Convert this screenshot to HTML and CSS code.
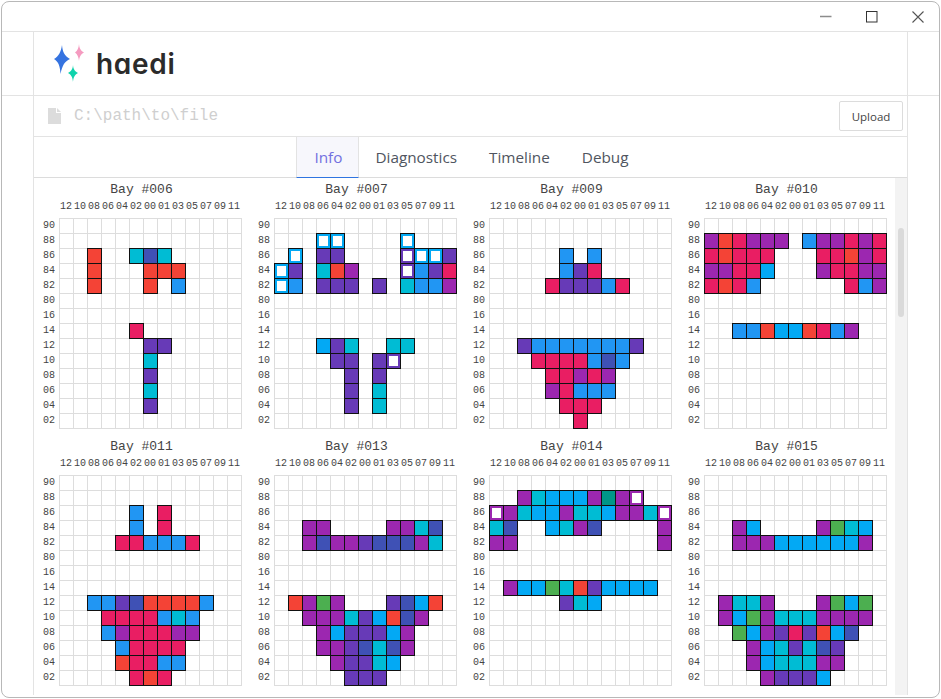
FILE: index.html
```html
<!DOCTYPE html>
<html lang="en">
<head>
    <meta charset="UTF-8">
    <meta name="viewport" content="width=device-width, initial-scale=1.0">
    <title>haedi</title>
    <link rel="stylesheet" href="styles.css">
</head>
<body>
    <div class="window">
        <div class="titlebar">
            <button class="win_btn"><svg width="12" height="12" viewBox="0 0 12 12"><path d="M0 5.5H11.5" stroke="#8c8c8c" stroke-width="1.4"/></svg></button>
            <button class="win_btn"><svg width="12" height="12" viewBox="0 0 12 12"><rect x="0.5" y="0.5" width="10.5" height="10.5" fill="none" stroke="#333" stroke-width="1"/></svg></button>
            <button class="win_btn"><svg width="12" height="12" viewBox="0 0 12 12"><path d="M0.5 0.5L11.5 11.5M11.5 0.5L0.5 11.5" stroke="#555" stroke-width="1.1" fill="none"/></svg></button>
        </div>

        <div class="header">
            <div class="container logo_row">
                <svg class="logo" width="34" height="40" viewBox="0 0 34 40">
                    <path d="M10 1C10.6 8 12.5 12 18 15C12.5 17.5 10.5 21 8.5 30C8 21 6 17.5 2 15C6.5 12.5 9 8 10 1Z" fill="#3573e0"/>
                    <path d="M27 0C27.3 4 28.5 6.5 32 8.500C28.500 10.500 27.500 13 27 17C26.500 13 25.500 10.500 23 8.500C25.500 6.500 26.700 4 27 0Z" fill="#f59bc0"/>
                    <path d="M21 21C21.300 25 22.500 27 26 29C22.500 31 21.500 33 21 38C20.500 33 19.500 31 16 29C19.500 27 20.700 25 21 21Z" fill="#0fd3ac"/>
                </svg>
                <span class="logo_text">haedi</span>
            </div>
        </div>

        <div class="container main">
            <div class="file_row">
                <svg class="file_icon" width="13" height="16" viewBox="0 0 13 16"><path d="M0 0H8V5H13V16H0ZM9 0L13 4H9Z" fill="#dcdcdc"/></svg>
                <span class="file_path">C:\path\to\file</span>
                <button class="upload_btn">Upload</button>
            </div>

            <div class="tabs">
                <div class="tab active">Info</div>
                <div class="tab">Diagnostics</div>
                <div class="tab">Timeline</div>
                <div class="tab">Debug</div>
            </div>

            <div class="content">
                <div class="bays" id="bays"></div>
                <div class="scrollbar"><div class="thumb"></div></div>
            </div>
        </div>
    </div>

    <script src="script.js"></script>
</body>
</html>
```

FILE: styles.css
```css
html, body {
    margin: 0;
    padding: 0;
    background-color: #fff;
    overflow: hidden;
}

.window {
    box-sizing: border-box;
    width: 939px;
    height: 697px;
    margin: 1px;
    border: 1px solid #b8b8b8;
    border-radius: 8px;
    background-color: #fff;
    display: flex;
    flex-direction: column;
    overflow: hidden;
}

.titlebar {
    box-sizing: border-box;
    height: 30px;
    flex: none;
    display: flex;
    justify-content: flex-end;
    margin-right: -2px;
    border-bottom: 1px solid #e3e3e3;
}

.win_btn {
    width: 46px;
    padding: 0;
    border: none;
    background: none;
    display: flex;
    align-items: center;
    justify-content: center;
}

.header {
    flex: none;
    border-bottom: 1px solid #e3e3e3;
}

.container {
    box-sizing: border-box;
    width: 875px;
    margin: 0 auto;
    border-left: 1px solid #e3e3e3;
    border-right: 1px solid #e3e3e3;
}

.logo_row {
    height: 63px;
    display: flex;
    align-items: center;
    padding-left: 18px;
}

.logo {
    align-self: flex-start;
    margin-top: 12px;
}

.logo_text {
    margin-left: 10px;
    margin-top: 1px;
    font-family: "Inter", sans-serif;
    font-feature-settings: "cv11";
    font-size: 28px;
    font-weight: 600;
    letter-spacing: 0.7px;
    color: #2b2b2b;
}

.main {
    flex: 1;
    min-height: 0;
    margin-bottom: 2px;
    display: flex;
    flex-direction: column;
}

.file_row {
    box-sizing: border-box;
    height: 41px;
    flex: none;
    display: flex;
    align-items: center;
    padding: 0 4px 0 14px;
    border-bottom: 1px solid #e3e3e3;
}

.file_path {
    flex: 1;
    margin-left: 13px;
    font-family: "Liberation Mono", monospace;
    font-size: 16px;
    color: #cfcfcf;
}

.upload_btn {
    width: 64px;
    height: 30px;
    padding: 0;
    background-color: #fff;
    border: 1px solid #dcdcdc;
    border-radius: 2px;
    font-family: "Open Sans", sans-serif;
    font-size: 11.5px;
    color: #444;
}

.tabs {
    box-sizing: border-box;
    height: 41px;
    flex: none;
    display: flex;
    justify-content: center;
    border-bottom: 1px solid #dcdcdc;
}

.tab {
    padding: 0 16px;
    margin-bottom: -1px;
    line-height: 40px;
    font-family: "Open Sans", sans-serif;
    font-size: 15.3px;
    color: #4f5560;
}

.tab.active {
    padding: 0 16px 0 17px;
    color: #7270e0;
    background-color: #f7f7fc;
    border-left: 1px solid #e3e3e3;
    border-right: 1px solid #e3e3e3;
    border-bottom: 1px solid #2f74e0;
}

.content {
    flex: 1;
    min-height: 0;
    display: flex;
}

.bays {
    width: 860px;
    flex: none;
    overflow: hidden;
    display: flex;
    flex-wrap: wrap;
    align-content: flex-start;
}

.scrollbar {
    margin-left: 1px;
    flex: 1;
    background-color: #f3f3f3;
    padding-top: 50px;
}

.thumb {
    width: 6px;
    height: 89px;
    margin-left: 3px;
    border-radius: 3px;
    background-color: #dadada;
}

.bay {
    width: 215px;
    height: 257px;
    font-family: "Liberation Mono", monospace;
    color: #444;
}

.bay_title {
    margin-top: 4px;
    height: 16px;
    line-height: 16px;
    font-size: 13px;
    text-align: center;
}

.bay_grid {
    margin-top: 2px;
    display: grid;
    grid-template-columns: 25px repeat(13, 14px);
    grid-template-rows: 18px repeat(14, 15px);
    font-size: 10px;
}

.col_label {
    text-align: center;
    line-height: 14px;
}

.row_label {
    text-align: right;
    padding-right: 4px;
    line-height: 15px;
}

.cell {
    box-sizing: border-box;
    width: 15px;
    height: 16px;
    border: 1px solid #ddd;
}

.cell.full {
    position: relative;
    z-index: 1;
    border-color: #111;
}

.cell.hollow {
    padding: 2px;
}

.cell.hollow::after {
    content: "";
    display: block;
    height: 100%;
    background-color: #fff;
}

.c_r { background-color: #f44336; }
.c_b { background-color: #2196f3; }
.c_l { background-color: #03a9f4; }
.c_c { background-color: #00bcd4; }
.c_i { background-color: #3f51b5; }
.c_d { background-color: #673ab7; }
.c_p { background-color: #9c27b0; }
.c_k { background-color: #e91e63; }
.c_g { background-color: #4caf50; }
.c_t { background-color: #009688; }
```

FILE: script.js
```js
const colLabels = ['12', '10', '08', '06', '04', '02', '00', '01', '03', '05', '07', '09', '11'];
const rowLabels = ['90', '88', '86', '84', '82', '80', '16', '14', '12', '10', '08', '06', '04', '02'];

// one letter per cell, uppercase = hollow (white centre)
const bays = [
    { name: '006', rows: {
        86: '..r..cic.....',
        84: '..r...rrr....',
        82: '..r...r.b....',
        14: '.....k.......',
        12: '......dd.....',
        10: '......c......',
        '08': '......d......',
        '06': '......c......',
        '04': '......d......'
    } },
    { name: '007', rows: {
        88: '...LL....L...',
        86: '.L.dd....DLLd',
        84: 'Ld.crp...Dbdk',
        82: 'Lb.ddd.d.cbbp',
        12: '...ldc..cc...',
        10: '....dd.dD....',
        '08': '.....d.d.....',
        '06': '.....d.c.....',
        '04': '.....d.c.....'
    } },
    { name: '009', rows: {
        86: '.....b.b.....',
        84: '.....bdk.....',
        82: '....kdddbk...',
        12: '..dbbbbbbbd..',
        10: '...kkkkbib...',
        '08': '....kkpkp....',
        '06': '....pkbbb....',
        '04': '.....kkk.....',
        '02': '......k......'
    } },
    { name: '010', rows: {
        88: 'prkppp.bppkpk',
        86: 'krkkk...kkrpk',
        84: 'ppkkl...pkkpp',
        82: 'krkb......kbp',
        14: '..bbrllrkbp..'
    } },
    { name: '011', rows: {
        86: '.....b.k.....',
        84: '.....b.k.....',
        82: '....kkbbbk...',
        12: '..bbdirrrrb..',
        10: '...kkkkbcb...',
        '08': '...bpkkkpp...',
        '06': '....bkkkk....',
        '04': '....rkkbb....',
        '02': '.....krk.....'
    } },
    { name: '013', rows: {
        84: '..pp....ppci.',
        82: '..pippdiiipc.',
        12: '.rpgp...dilr.',
        10: '..pppcdlrip..',
        '08': '...pldddlp...',
        '06': '...ppdicip...',
        '04': '....pddcl....',
        '02': '.....ddd.....'
    } },
    { name: '014', rows: {
        88: '..pclllptpP..',
        86: 'PpcllpcclppcP',
        84: 'ci..lcpi....p',
        82: 'pp..........p',
        14: '.pllgcrdllll.',
        12: '.....dcl.....'
    } },
    { name: '015', rows: {
        84: '..pl....pgcl.',
        82: '..pppllllllp.',
        12: '.pccp...pglg.',
        10: '.plgpcccpppp.',
        '08': '..glpdkdrli..',
        '06': '...plcdcid...',
        '04': '...plcccpp...',
        '02': '....pdddl....'
    } }
];

function makeDiv(className, text) {
    const div = document.createElement('div');
    div.className = className;
    if (text) div.textContent = text;
    return div;
}

function makeCell(letter) {
    if (letter === '.') return makeDiv('cell');
    const lower = letter.toLowerCase();
    const hollow = letter !== lower ? ' hollow' : '';
    return makeDiv('cell full c_' + lower + hollow);
}

function makeBay(bay) {
    const box = makeDiv('bay');
    box.appendChild(makeDiv('bay_title', 'Bay #' + bay.name));

    const grid = makeDiv('bay_grid');
    grid.appendChild(makeDiv('corner'));
    colLabels.forEach(label => grid.appendChild(makeDiv('col_label', label)));

    rowLabels.forEach(label => {
        grid.appendChild(makeDiv('row_label', label));
        const row = bay.rows[label] || '.............';
        row.split('').forEach(letter => grid.appendChild(makeCell(letter)));
    });

    box.appendChild(grid);
    return box;
}

const baysEl = document.getElementById('bays');
bays.forEach(bay => baysEl.appendChild(makeBay(bay)));
```
